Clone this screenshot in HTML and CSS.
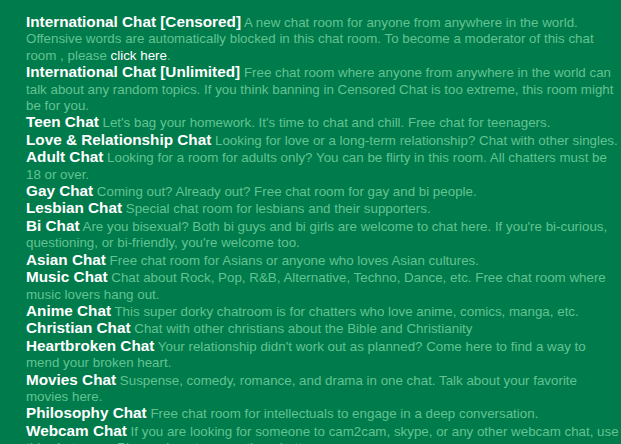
FILE: index.html
```html
<!DOCTYPE html>
<html>
<head>
<meta charset="utf-8">
<link rel="stylesheet" href="styles.css">
</head>
<body>
<div class="rooms">
  <div class="room"><span class="name">International Chat [Censored]</span> A new chat room for anyone from anywhere in the world. Offensive words are automatically blocked in this chat room. To become a moderator of this chat room , please <a class="link" href="#">click here</a>.</div>
  <div class="room"><span class="name">International Chat [Unlimited]</span> Free chat room where anyone from anywhere in the world can talk about any random topics. If you think banning in Censored Chat is too extreme, this room might be for you.</div>
  <div class="room"><span class="name">Teen Chat</span> Let's bag your homework. It's time to chat and chill. Free chat for teenagers.</div>
  <div class="room"><span class="name">Love &amp; Relationship Chat</span> Looking for love or a long-term relationship? Chat with other singles.</div>
  <div class="room"><span class="name">Adult Chat</span> Looking for a room for adults only? You can be flirty in this room. All chatters must be 18 or over.</div>
  <div class="room"><span class="name">Gay Chat</span> Coming out? Already out? Free chat room for gay and bi people.</div>
  <div class="room"><span class="name">Lesbian Chat</span> Special chat room for lesbians and their supporters.</div>
  <div class="room"><span class="name">Bi Chat</span> Are you bisexual? Both bi guys and bi girls are welcome to chat here. If you're bi-curious, questioning, or bi-friendly, you're welcome too.</div>
  <div class="room"><span class="name">Asian Chat</span> Free chat room for Asians or anyone who loves Asian cultures.</div>
  <div class="room"><span class="name">Music Chat</span> Chat about Rock, Pop, R&amp;B, Alternative, Techno, Dance, etc. Free chat room where music lovers hang out.</div>
  <div class="room"><span class="name">Anime Chat</span> This super dorky chatroom is for chatters who love anime, comics, manga, etc.</div>
  <div class="room"><span class="name">Christian Chat</span> Chat with other christians about the Bible and Christianity</div>
  <div class="room"><span class="name">Heartbroken Chat</span> Your relationship didn't work out as planned? Come here to find a way to mend your broken heart.</div>
  <div class="room"><span class="name">Movies Chat</span> Suspense, comedy, romance, and drama in one chat. Talk about your favorite movies here.</div>
  <div class="room"><span class="name">Philosophy Chat</span> Free chat room for intellectuals to engage in a deep conversation.</div>
  <div class="room"><span class="name">Webcam Chat</span> If you are looking for someone to cam2cam, skype, or any other webcam chat, use this chat room. Please do not spam other chatters.</div>
</div>
</body>
</html>
```

FILE: styles.css
```css
html, body {
  margin: 0;
  padding: 0;
  background: #007b4b;
  overflow: hidden;
}
.rooms {
  padding: 14px 0 0 26px;
  font-family: "Liberation Sans", Arial, sans-serif;
  font-size: 13.35px;
  line-height: 16.4px;
  color: #62c392;
}
.room {
  margin: 0;
}
.name {
  font-size: 15.3px;
  font-weight: bold;
  color: #ffffff;
  line-height: 16.4px;
}
.link {
  color: #ffffff;
  text-decoration: none;
}
```
